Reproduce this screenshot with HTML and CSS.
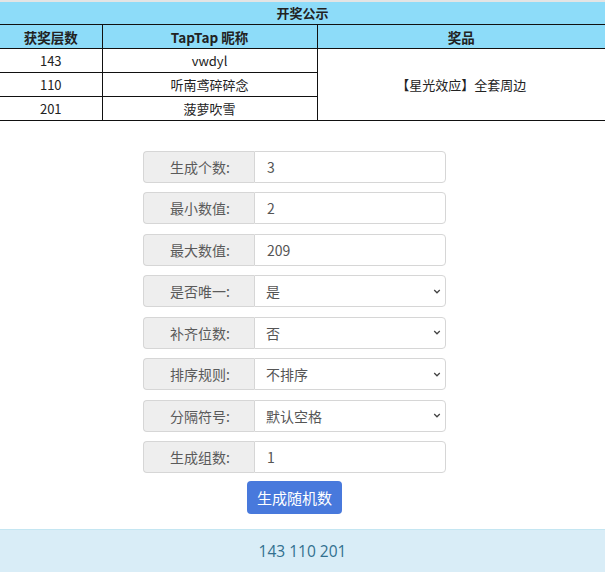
FILE: index.html
```html
<!DOCTYPE html>
<html lang="zh">
<head>
<meta charset="utf-8">
<title>开奖公示</title>
<link rel="stylesheet" href="styles.css">
</head>
<body>
<table class="prize">
  <colgroup>
    <col class="c1"><col class="c2"><col class="c3">
  </colgroup>
  <tr class="title"><th colspan="3">开奖公示</th></tr>
  <tr class="head"><th>获奖层数</th><th>TapTap 昵称</th><th>奖品</th></tr>
  <tr><td>143</td><td>vwdyl</td><td rowspan="3">【星光效应】全套周边</td></tr>
  <tr><td>110</td><td>听南鸢碎碎念</td></tr>
  <tr><td>201</td><td>菠萝吹雪</td></tr>
</table>

<form class="gen">
  <div class="row"><span class="label">生成个数:</span><input class="field" value="3"></div>
  <div class="row"><span class="label">最小数值:</span><input class="field" value="2"></div>
  <div class="row"><span class="label">最大数值:</span><input class="field" value="209"></div>
  <div class="row"><span class="label">是否唯一:</span><select class="field sel"><option>是</option><option>否</option></select></div>
  <div class="row"><span class="label">补齐位数:</span><select class="field sel"><option>否</option><option>是</option></select></div>
  <div class="row"><span class="label">排序规则:</span><select class="field sel"><option>不排序</option><option>升序</option><option>降序</option></select></div>
  <div class="row"><span class="label">分隔符号:</span><select class="field sel"><option>默认空格</option><option>逗号</option></select></div>
  <div class="row"><span class="label">生成组数:</span><input class="field" value="1"></div>
  <div class="actions"><button type="button" class="btn">生成随机数</button></div>
</form>

<div class="result">143 110 201</div>
</body>
</html>
```

FILE: styles.css
```css
html, body {
  margin: 0;
  padding: 0;
  background: #fff;
}
body {
  font-family: "Noto Sans CJK SC", "Noto Sans", "Liberation Sans", sans-serif;
  color: #222;
}
.prize {
  width: 605px;
  border-collapse: collapse;
  border-top: 2px solid #e4e4e4;
  font-size: 13px;
  table-layout: fixed;
}
.c1 { width: 102px; }
.c2 { width: 215px; }
.c3 { width: 288px; }
.prize th, .prize td {
  border: 1px solid #111;
  text-align: center;
  padding: 0;
  height: 23px;
  line-height: 22px;
  font-weight: normal;
}
.prize tr > :first-child { border-left: none; }
.prize tr > :last-child { border-right: none; }
.prize .title th {
  background: #8ddcf9;
  font-weight: bold;
  border-top: none;
  height: 22px;
}
.prize .head th {
  background: #8ddcf9;
  font-weight: bold;
  font-size: 13.5px;
}
.prize td[rowspan] { border-right: none; }

.gen {
  width: 303px;
  margin: 30px 0 0 143px;
  font-size: 14px;
  color: #555;
}
.row {
  display: flex;
  height: 32px;
  margin-bottom: 9.43px;
}
.label {
  width: 111px;
  flex: none;
  box-sizing: border-box;
  background: #eee;
  border: 1px solid #d6d6d6;
  border-right: none;
  border-radius: 4px 0 0 4px;
  display: flex;
  align-items: center;
  justify-content: center;
  padding-left: 2px;
  color: #5a5a5a;
}
.field {
  flex: 1;
  min-width: 0;
  box-sizing: border-box;
  height: 32px;
  margin: 0;
  border: 1px solid #d6d6d6;
  border-radius: 0 4px 4px 0;
  padding: 0 12px;
  font: inherit;
  color: #555;
  background: #fff;
  outline: none;
}
.sel {
  appearance: none;
  -webkit-appearance: none;
  padding-left: 11px;
  background-image: url("data:image/svg+xml,%3Csvg xmlns='http://www.w3.org/2000/svg' width='10' height='6' viewBox='0 0 10 6'%3E%3Cpath d='M1.5 1.2 L5 4.6 L8.5 1.2' fill='none' stroke='%23444' stroke-width='1.6'/%3E%3C/svg%3E");
  background-repeat: no-repeat;
  background-position: right 4px center;
  background-size: 8px 5px;
}
.actions {
  display: flex;
  justify-content: center;
  margin-top: -1.4px;
}
.btn {
  width: 95px;
  height: 33px;
  border: none;
  border-radius: 4px;
  background: #4879dc;
  color: #fff;
  font: inherit;
  font-size: 15px;
  padding: 0;
}
.result {
  margin-top: 15px;
  height: 43px;
  box-sizing: border-box;
  background: #d9edf7;
  border-top: 1px solid #c4e6f2;
  display: flex;
  align-items: center;
  justify-content: center;
  color: #31708f;
  font-size: 15.5px;
  font-family: "Open Sans", "Noto Sans CJK SC", sans-serif;
}
```
